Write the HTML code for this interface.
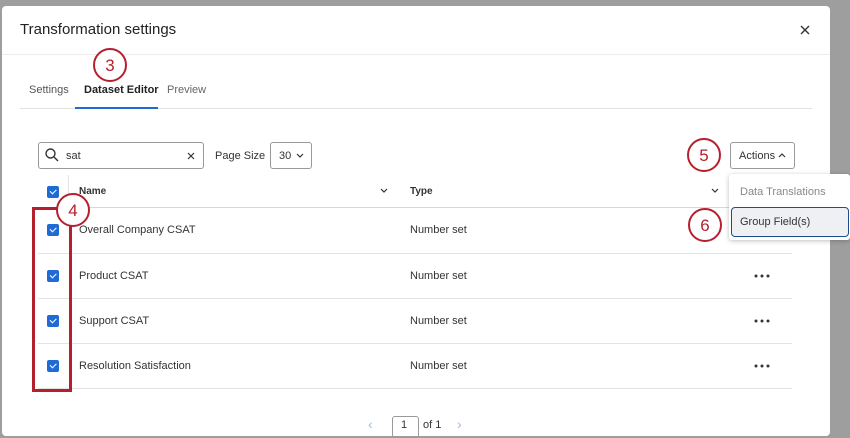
<!DOCTYPE html><html><head><style>
body{margin:0;width:850px;height:425px;overflow:hidden;background:#9e9e9e;font-family:"Liberation Sans",sans-serif;position:relative}
.a{position:absolute}
.m{left:2px;top:6px;width:828px;height:430px;background:#fff;border-radius:4px}
.t{font-size:11px;color:#333}
.ln{height:1px;background:#e3e3e3}
.cb{width:12px;height:12px;background:#1f6ad4;border-radius:2px}
.cb:after{content:"";position:absolute;left:3px;top:3px;width:5px;height:2.5px;border-left:1.5px solid #fff;border-bottom:1.5px solid #fff;transform:rotate(-45deg)}
.c{width:34px;height:34px;border:2.5px solid #b5202e;border-radius:50%;background:#fff;color:#b5202e;font-size:17px;text-align:center;line-height:32px;box-sizing:border-box}
</style></head><body>
<div class="a m"></div>
<div class="a" style="left:20px;top:21px;font-size:15px;color:#222">Transformation settings</div>
<svg class="a" style="left:800px;top:25px" width="10" height="10"><path d="M1 1L9 9M9 1L1 9" stroke="#333" stroke-width="1.4"/></svg>
<div class="a ln" style="left:2px;top:54px;width:828px;background:#ececec"></div>
<div class="a t" style="left:29px;top:84px;color:#555">Settings</div>
<div class="a t" style="left:84px;top:84px;color:#222;font-weight:bold">Dataset Editor</div>
<div class="a t" style="left:167px;top:84px;color:#666">Preview</div>
<div class="a ln" style="left:20px;top:108px;width:792px"></div>
<div class="a" style="left:75px;top:107px;width:83px;height:2px;background:#1f6ad4"></div>
<div class="a" style="left:38px;top:142px;width:164px;height:25px;border:1px solid #999;border-radius:3px"></div>
<svg class="a" style="left:44px;top:147px" width="16" height="16"><circle cx="6.5" cy="6.5" r="4.5" fill="none" stroke="#333" stroke-width="1.4"/><line x1="10" y1="10" x2="14" y2="14" stroke="#333" stroke-width="1.4"/></svg>
<div class="a t" style="left:66px;top:150px">sat</div>
<svg class="a" style="left:187px;top:152px" width="8" height="8"><path d="M1 1L7 7M7 1L1 7" stroke="#333" stroke-width="1.2"/></svg>
<div class="a t" style="left:215px;top:150px">Page Size</div>
<div class="a" style="left:270px;top:142px;width:40px;height:25px;border:1px solid #999;border-radius:3px"></div>
<div class="a t" style="left:279px;top:150px">30</div>
<svg class="a" style="left:296px;top:153px" width="8" height="6"><path d="M1 1L4 4L7 1" fill="none" stroke="#333" stroke-width="1.2"/></svg>
<div class="a" style="left:730px;top:142px;width:63px;height:25px;border:1px solid #999;border-radius:3px"></div>
<div class="a t" style="left:739px;top:150px">Actions</div>
<svg class="a" style="left:778px;top:152px" width="8" height="6"><path d="M1 5L4 2L7 5" fill="none" stroke="#333" stroke-width="1.2"/></svg>
<div class="a cb" style="left:47px;top:186px"></div>
<div class="a" style="left:68px;top:175px;width:1px;height:32px;background:#e3e3e3"></div>
<div class="a t" style="left:79px;top:186px;font-size:10px;font-weight:bold">Name</div>
<svg class="a" style="left:380px;top:188px" width="8" height="6"><path d="M1 1L4 4L7 1" fill="none" stroke="#333" stroke-width="1.2"/></svg>
<div class="a t" style="left:410px;top:186px;font-size:10px;font-weight:bold">Type</div>
<svg class="a" style="left:711px;top:188px" width="8" height="6"><path d="M1 1L4 4L7 1" fill="none" stroke="#333" stroke-width="1.2"/></svg>
<div class="a ln" style="left:38px;top:207px;width:754px;background:#d8d8d8"></div>
<div class="a cb" style="left:47px;top:224px"></div><div class="a t" style="left:79px;top:224px">Overall Company CSAT</div><div class="a t" style="left:410px;top:224px">Number set</div>
<div class="a ln" style="left:38px;top:253px;width:754px"></div>
<div class="a cb" style="left:47px;top:270px"></div><div class="a t" style="left:79px;top:270px">Product CSAT</div><div class="a t" style="left:410px;top:270px">Number set</div>
<svg class="a" style="left:754px;top:274px" width="16" height="4"><circle cx="2" cy="2" r="1.5" fill="#333"/><circle cx="8" cy="2" r="1.5" fill="#333"/><circle cx="14" cy="2" r="1.5" fill="#333"/></svg>
<div class="a ln" style="left:38px;top:298px;width:754px"></div>
<div class="a cb" style="left:47px;top:315px"></div><div class="a t" style="left:79px;top:315px">Support CSAT</div><div class="a t" style="left:410px;top:315px">Number set</div>
<svg class="a" style="left:754px;top:319px" width="16" height="4"><circle cx="2" cy="2" r="1.5" fill="#333"/><circle cx="8" cy="2" r="1.5" fill="#333"/><circle cx="14" cy="2" r="1.5" fill="#333"/></svg>
<div class="a ln" style="left:38px;top:343px;width:754px"></div>
<div class="a cb" style="left:47px;top:360px"></div><div class="a t" style="left:79px;top:360px">Resolution Satisfaction</div><div class="a t" style="left:410px;top:360px">Number set</div>
<svg class="a" style="left:754px;top:364px" width="16" height="4"><circle cx="2" cy="2" r="1.5" fill="#333"/><circle cx="8" cy="2" r="1.5" fill="#333"/><circle cx="14" cy="2" r="1.5" fill="#333"/></svg>
<div class="a ln" style="left:38px;top:388px;width:754px"></div>
<div class="a" style="left:32px;top:207px;width:34px;height:179px;border:3px solid #b5202e"></div>
<div class="a" style="left:392px;top:416px;width:25px;height:20px;border:1px solid #999;border-radius:3px"></div>
<div class="a t" style="left:401px;top:419px">1</div><div class="a t" style="left:423px;top:419px">of 1</div>
<div class="a" style="left:368px;top:416px;color:#9bbbe8;font-size:14px">‹</div><div class="a" style="left:457px;top:416px;color:#9bbbe8;font-size:14px">›</div>
<div class="a" style="left:729px;top:174px;width:121px;height:66px;background:#fff;box-shadow:0 1px 5px rgba(0,0,0,.25);border-radius:3px"></div>
<div class="a t" style="left:740px;top:186px;color:#888">Data Translations</div>
<div class="a" style="left:731px;top:207px;width:116px;height:28px;background:#eef0f3;border:1.5px solid #1b4f8c;border-radius:4px"></div>
<div class="a t" style="left:740px;top:216px">Group Field(s)</div>
<div class="a c" style="left:93px;top:48px">3</div>
<div class="a c" style="left:56px;top:193px">4</div>
<div class="a c" style="left:687px;top:138px">5</div>
<div class="a c" style="left:688px;top:208px">6</div>
</body></html>
